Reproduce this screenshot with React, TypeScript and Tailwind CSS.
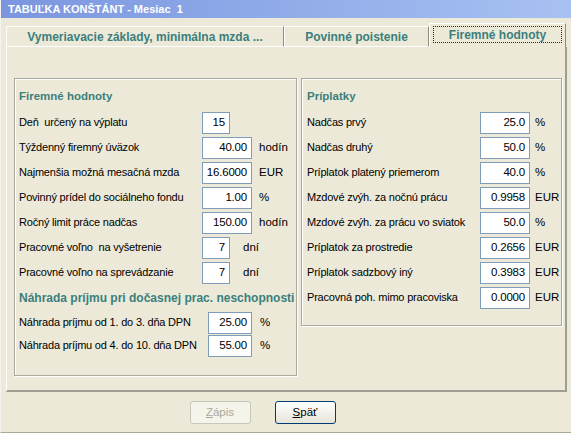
import React from 'react'

const font = { fontFamily: '"Liberation Sans", Arial, sans-serif' }

type Row = { label: string; value: string; unit?: string; narrow?: boolean }

const firemne: Row[] = [
  { label: 'Deň  určený na výplatu', value: '15', narrow: true },
  { label: 'Týždenný firemný úväzok', value: '40.00', unit: 'hodín' },
  { label: 'Najmenšia možná mesačná mzda', value: '16.6000', unit: 'EUR' },
  { label: 'Povinný prídel do sociálneho fondu', value: '1.00', unit: '%' },
  { label: 'Ročný limit práce nadčas', value: '150.00', unit: 'hodín' },
  { label: 'Pracovné voľno  na vyšetrenie', value: '7', unit: 'dní', narrow: true },
  { label: 'Pracovné voľno na sprevádzanie', value: '7', unit: 'dní', narrow: true },
]

const nahrada: Row[] = [
  { label: 'Náhrada príjmu od 1. do 3. dňa DPN', value: '25.00', unit: '%' },
  { label: 'Náhrada príjmu od 4. do 10. dňa DPN', value: '55.00', unit: '%' },
]

const priplatky: Row[] = [
  { label: 'Nadčas prvý', value: '25.0', unit: '%' },
  { label: 'Nadčas druhý', value: '50.0', unit: '%' },
  { label: 'Príplatok platený priemerom', value: '40.0', unit: '%' },
  { label: 'Mzdové zvýh. za nočnú prácu', value: '0.9958', unit: 'EUR' },
  { label: 'Mzdové zvýh. za prácu vo sviatok', value: '50.0', unit: '%' },
  { label: 'Príplatok za prostredie', value: '0.2656', unit: 'EUR' },
  { label: 'Príplatok sadzbový iný', value: '0.3983', unit: 'EUR' },
  { label: 'Pracovná poh. mimo pracoviska', value: '0.0000', unit: 'EUR' },
]

function Field({ row, labelW, h, inputW = 50, unitGap }: { row: Row; labelW: string; h: string; inputW?: number; unitGap: string }) {
  return (
    <div className={`flex items-center ${h}`}>
      <span className={`${labelW} shrink-0 whitespace-pre text-[11px] tracking-[-0.2px] text-black`}>{row.label}</span>
      <div
        className={`flex h-[22px] shrink-0 items-center justify-end border border-[#7f9db9] bg-white pr-[4px] text-[11.5px] tracking-[-0.2px] text-black ${row.narrow ? 'w-[28px]' : inputW === 44 ? 'w-[44px]' : 'w-[50px]'}`}
      >
        {row.value}
      </div>
      {row.unit && (
        <span className={`${row.narrow ? 'ml-[13px]' : unitGap} text-[11.5px] text-black`}>{row.unit}</span>
      )}
    </div>
  )
}

function Group({ children, w, h }: { children: React.ReactNode; w: string; h: string }) {
  return (
    <div className={`${w} ${h} shrink-0 border border-[#a9a89f] shadow-[inset_1px_1px_0_#ffffff,1px_1px_0_#ffffff]`}>
      {children}
    </div>
  )
}

function Tab({ label, w, active }: { label: string; w: string; active?: boolean }) {
  return (
    <div
      className={`${w} flex shrink-0 items-center justify-center whitespace-nowrap border-l border-t border-r border-l-white border-t-white border-r-[#8d8b7f] text-[12px] font-bold text-[#3b7f7c] ${active ? 'h-[24px] bg-[#ece9d8] px-[3px] pb-[3px] pt-[1px]' : 'h-[21px] border-b border-b-white'}`}
    >
      {active ? (
        <div className="flex h-[17px] w-full items-center justify-center border border-dotted border-[#4b1a1a]">{label}</div>
      ) : (
        label
      )}
    </div>
  )
}

export default function App() {
  return (
    <div style={font} className="flex h-[433px] w-[571px] flex-col border-b border-l border-b-[#aca899] border-l-[#f4f3ee] bg-[#ece9d8]">
      <div className="flex h-[18px] shrink-0 items-center whitespace-pre bg-gradient-to-r from-[#7b96df] to-[#a7c1f2] pl-[7px] text-[11px] font-bold text-white">
        TABUĽKA KONŠTÁNT - Mesiac  1
      </div>

      <div className="mt-[5px] flex items-end pl-[5px]">
        <Tab label="Vymeriavacie základy, minimálna mzda ..." w="w-[278px]" />
        <Tab label="Povinné poistenie" w="w-[145px]" />
        <Tab label="Firemné hodnoty" w="w-[137px]" active />
      </div>

      <div className="ml-[5px] flex h-[345px] w-[561px] flex-col border-l border-r-2 border-b-2 border-l-white border-r-[#a09e92] border-b-[#a09e92] pl-[7px] pt-[31px]">
        <div className="flex items-start gap-[4px]">
          <Group w="w-[283px]" h="h-[298px]">
            <div className="flex flex-col pl-[4px] pt-[9px]">
              <div className="h-[22px] whitespace-nowrap text-[11.5px] font-bold text-[#3b7f7c]">Firemné hodnoty</div>
              {firemne.map((r) => (
                <Field key={r.label} row={r} labelW="w-[183px]" h="h-[25px]" unitGap="ml-[7px]" />
              ))}
              <div className="mt-[4px] h-[22px] whitespace-nowrap text-[12px] font-bold text-[#3b7f7c]">
                Náhrada príjmu pri dočasnej prac. neschopnosti
              </div>
              {nahrada.map((r) => (
                <Field key={r.label} row={r} labelW="w-[189px]" h="h-[23px]" inputW={44} unitGap="ml-[8px]" />
              ))}
            </div>
          </Group>
          <Group w="w-[261px]" h="h-[248px]">
            <div className="flex flex-col pl-[5px] pt-[9px]">
              <div className="h-[22px] whitespace-nowrap text-[11.5px] font-bold text-[#3b7f7c]">Príplatky</div>
              {priplatky.map((r) => (
                <Field key={r.label} row={r} labelW="w-[173px]" h="h-[25px]" unitGap="ml-[5px]" />
              ))}
            </div>
          </Group>
        </div>
      </div>

      <div className="mt-[9px] flex justify-center gap-[24px] pr-[47px]">
        <button className="h-[23px] w-[61px] rounded-[3px] border border-[#c9c7ba] bg-[#f5f4ea] text-[11.5px] text-[#aca899]">
          <span className="underline">Z</span>ápis
        </button>
        <button className="h-[23px] w-[61px] rounded-[3px] border border-[#003c74] bg-gradient-to-b from-white to-[#e6e4d8] text-[11.5px] text-black">
          <span className="underline">S</span>päť
        </button>
      </div>
    </div>
  )
}
